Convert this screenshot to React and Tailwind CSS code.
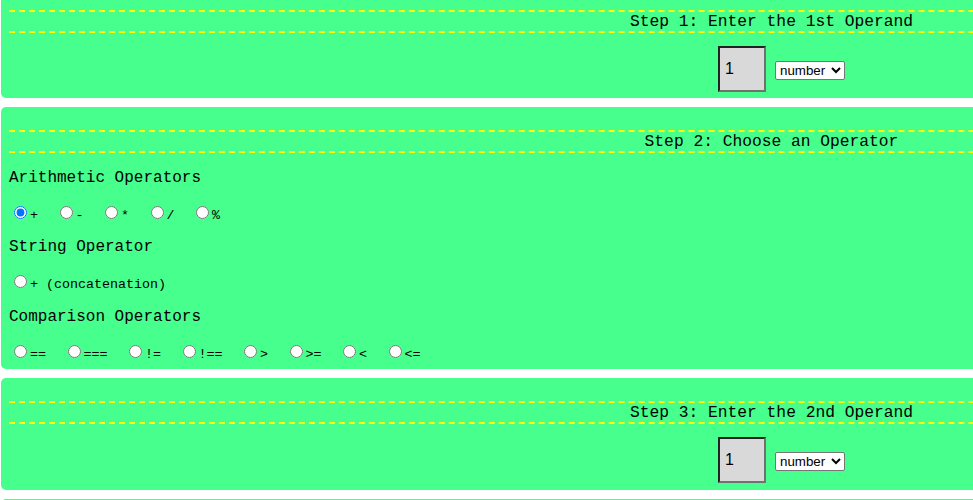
import React from 'react';

const mono = { fontFamily: '"Liberation Mono", "Courier New", monospace' };
const sans = { fontFamily: '"Liberation Sans", Arial, sans-serif' };

const StepHeader = ({ children }) => (
    <div className="border-t-2 border-b-2 border-dashed border-[#ffff00] text-center text-[16.27px] leading-[19px] text-black" style={mono}>
        {children}
    </div>
);

const OperandInput = () => (
    <div className="flex justify-center items-center pt-[13px] pl-[20px] gap-[9px]">
        <input
            type="text"
            defaultValue="1"
            className="w-[48px] h-[46px] bg-[#d9d9d9] border-2 border-t-[#222] border-l-[#222] border-r-[#717171] border-b-[#717171] pl-[5px] text-[16px] text-black"
            style={sans}
        />
        <select
            defaultValue="number"
            className="w-[70px] h-[19px] mt-[3px] bg-white border border-[#767676] rounded-[2px] text-[13.33px] text-black"
            style={sans}
        >
            <option value="number">number</option>
            <option value="string">string</option>
        </select>
    </div>
);

const RadioRow = ({ name, items, checked }) => (
    <div className="h-[20px] text-[13.33px] leading-normal text-black whitespace-nowrap" style={mono}>
        {items.map((op, i) => (
            <label key={op} className="mr-[16.5px]">
                <input type="radio" name={name} defaultChecked={checked === i} className="m-[3px_3px_0_5px]" />
                {op}
            </label>
        ))}
    </div>
);

const Heading = ({ children }) => (
    <div className="h-[18px] text-[16px] leading-[18px] text-black" style={mono}>{children}</div>
);

export default function App() {
    return (
        <div className="w-full h-[500px] overflow-hidden bg-white">
            <div className="w-[1542px] -mt-[13px]">
                {/* Step 1 */}
                <div className="ml-[1px] w-[1541px] rounded-[5px] bg-[#46ff8c] px-[8px] pt-[23px] pb-[6px] mb-[9px]">
                    <StepHeader>Step 1: Enter the 1st Operand</StepHeader>
                    <OperandInput />
                </div>

                {/* Step 2 */}
                <div className="ml-[1px] w-[1541px] rounded-[5px] bg-[#46ff8c] px-[8px] pt-[23px] pb-[7px] mb-[9px]">
                    <StepHeader>Step 2: Choose an Operator</StepHeader>
                    <div className="flex flex-col gap-[15.75px] pt-[15.75px]">
                        <Heading>Arithmetic Operators</Heading>
                        <RadioRow name="op" items={['+', '-', '*', '/', '%']} checked={0} />
                        <Heading>String Operator</Heading>
                        <RadioRow name="op" items={['+ (concatenation)']} />
                        <Heading>Comparison Operators</Heading>
                        <RadioRow name="op" items={['==', '===', '!=', '!==', '>', '>=', '<', '<=']} />
                    </div>
                </div>

                {/* Step 3 */}
                <div className="ml-[1px] w-[1541px] rounded-[5px] bg-[#46ff8c] px-[8px] pt-[23px] pb-[7px] mb-[9px]">
                    <StepHeader>Step 3: Enter the 2nd Operand</StepHeader>
                    <OperandInput />
                </div>

                {/* Step 4 (cut off) */}
                <div className="ml-[1px] w-[1541px] h-[60px] rounded-[5px] bg-[#46ff8c]"></div>
            </div>
        </div>
    );
}
